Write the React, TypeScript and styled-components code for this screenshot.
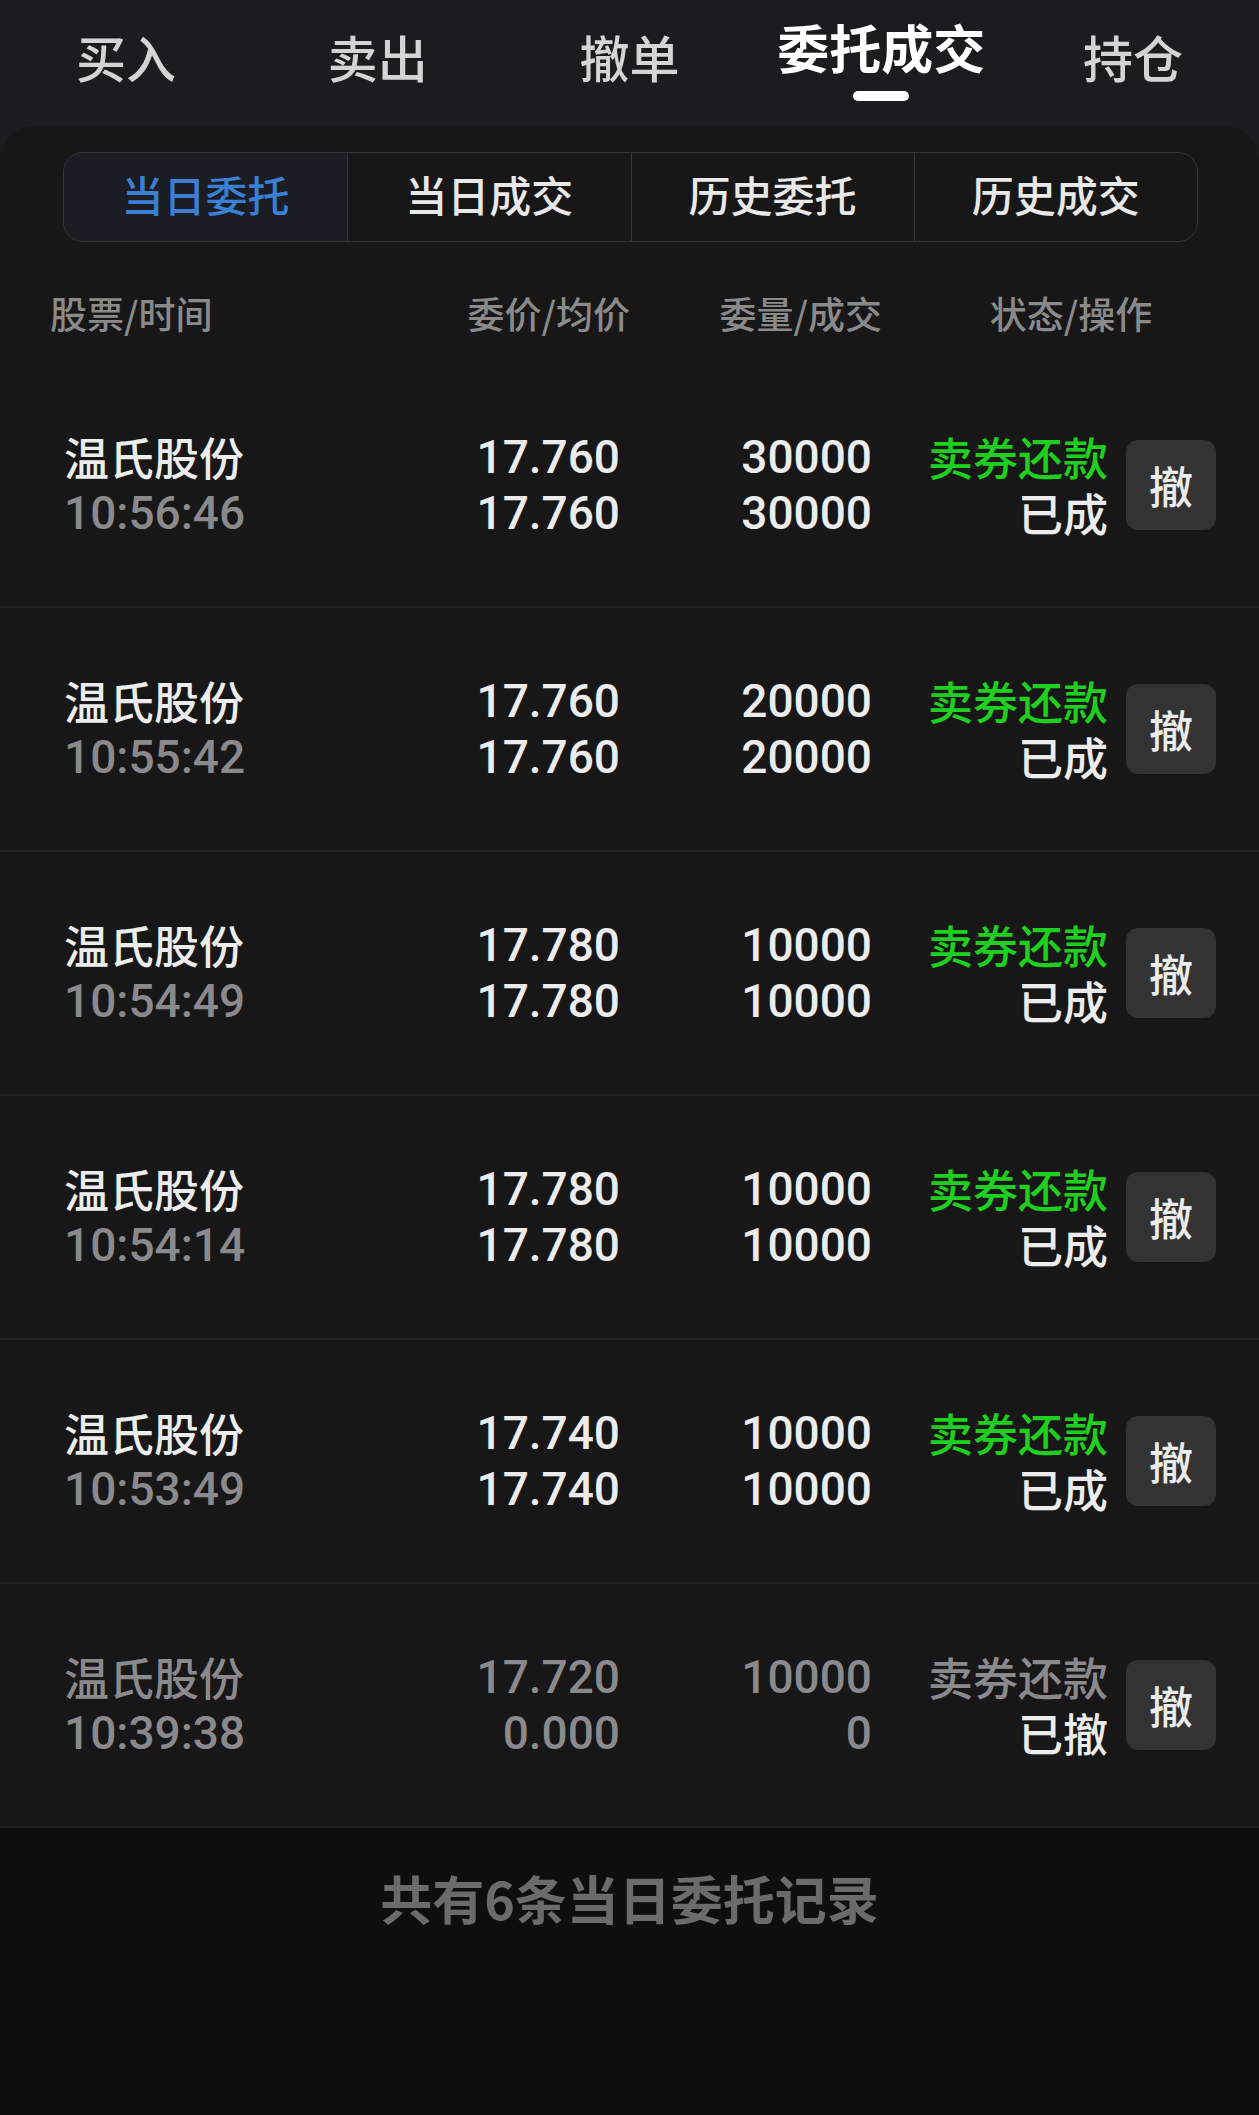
import React from "react";
import styled, { createGlobalStyle } from "styled-components";

const CJK = `"Noto Sans CJK SC", "Noto Sans", sans-serif`;
const NUM = `Roboto, "Noto Sans CJK SC", sans-serif`;

const Global = createGlobalStyle`
  html, body { margin: 0; padding: 0; background: #0e0e0e; }
  body { font-family: ${CJK}; -webkit-font-smoothing: antialiased; }
  #root { width: 1259px; }
`;

const Page = styled.div`
  width: 1259px;
  min-height: 2115px;
  background: #1c1c1e;
  display: flex;
  flex-direction: column;
`;

const TopTabs = styled.nav`
  display: grid;
  grid-template-columns: repeat(5, 1fr);
  height: 126px;
`;

const TopTab = styled.div<{ $active?: boolean }>`
  display: flex;
  flex-direction: column;
  align-items: center;
  padding-top: ${(p) => (p.$active ? 21 : 31)}px;
  font-size: ${(p) => (p.$active ? 52 : 50)}px;
  line-height: ${(p) => (p.$active ? 52 : 50)}px;
  color: ${(p) => (p.$active ? "#ffffff" : "#d4d4d4")};
  font-weight: ${(p) => (p.$active ? 700 : 500)};
`;

const Indicator = styled.span`
  margin-top: 18px;
  width: 56px;
  height: 10px;
  border-radius: 5px;
  background: #ffffff;
`;

const Card = styled.section`
  background: #171717;
  border-radius: 34px 34px 0 0;
  display: flex;
  flex-direction: column;
`;

const Segmented = styled.div`
  margin: 26px 61px 0 63px;
  height: 90px;
  box-sizing: border-box;
  border: 1.5px solid #363636;
  border-radius: 20px;
  display: grid;
  grid-template-columns: repeat(4, 1fr);
  overflow: hidden;
`;

const Segment = styled.div<{ $active?: boolean }>`
  display: flex;
  align-items: center;
  justify-content: center;
  padding-bottom: 6px;
  font-size: 42px;
  line-height: 42px;
  font-weight: 500;
  color: ${(p) => (p.$active ? "#3b7fd4" : "#e8e8e8")};
  background: ${(p) => (p.$active ? "#1a1d23" : "transparent")};
  & + & {
    border-left: 1.5px solid #363636;
  }
`;

const HeaderRow = styled.div`
  display: grid;
  grid-template-columns: 1fr 220px 252px 334px;
  height: 122px;
  box-sizing: border-box;
  padding: 53px 43px 0 50px;
  font-size: 37px;
  line-height: 36px;
  font-weight: 500;
  color: #8a8a8a;
`;

const HeaderCell = styled.div<{ $align: "left" | "right" | "center" }>`
  text-align: ${(p) => p.$align};
  padding-left: ${(p) => (p.$align === "center" ? 44 : 0)}px;
`;

const Row = styled.div`
  display: grid;
  grid-template-columns: 1fr 220px 252px 236px 108px;
  height: 244px;
  box-sizing: border-box;
  padding: 0 43px 0 64px;
  align-items: center;
  border-bottom: 2px solid #242424;
`;

const Cell = styled.div<{ $align: "start" | "end" }>`
  display: flex;
  flex-direction: column;
  align-items: flex-${(p) => p.$align};
  gap: 4px;
`;

const Line = styled.span<{ $num?: boolean; $color: string }>`
  font-family: ${(p) => (p.$num ? NUM : CJK)};
  font-size: ${(p) => (p.$num ? 46 : 45)}px;
  font-weight: 500;
  line-height: 52px;
  color: ${(p) => p.$color};
  white-space: nowrap;
`;

const CancelButton = styled.button`
  justify-self: end;
  width: 90px;
  height: 90px;
  border: none;
  border-radius: 12px;
  background: #333333;
  color: #ececec;
  font-family: ${CJK};
  font-size: 44px;
  line-height: 44px;
  font-weight: 500;
  padding: 0;
  display: flex;
  align-items: center;
  justify-content: center;
`;

const Footer = styled.footer`
  flex: 1;
  background: #0e0e0e;
  display: flex;
  justify-content: center;
  padding-top: 44px;
  font-size: 52px;
  line-height: 52px;
  font-weight: 700;
  color: #6b6b6b;
`;

type Order = {
  time: string;
  price: string;
  avg: string;
  qty: string;
  filled: string;
  status: string;
  cancelled?: boolean;
};

const orders: Order[] = [
  { time: "10:56:46", price: "17.760", avg: "17.760", qty: "30000", filled: "30000", status: "已成" },
  { time: "10:55:42", price: "17.760", avg: "17.760", qty: "20000", filled: "20000", status: "已成" },
  { time: "10:54:49", price: "17.780", avg: "17.780", qty: "10000", filled: "10000", status: "已成" },
  { time: "10:54:14", price: "17.780", avg: "17.780", qty: "10000", filled: "10000", status: "已成" },
  { time: "10:53:49", price: "17.740", avg: "17.740", qty: "10000", filled: "10000", status: "已成" },
  { time: "10:39:38", price: "17.720", avg: "0.000", qty: "10000", filled: "0", status: "已撤", cancelled: true },
];

const WHITE = "#ececec";
const GREY = "#8a8a8c";
const GREEN = "#1fcf1f";

export default function App() {
  const tabs = ["买入", "卖出", "撤单", "委托成交", "持仓"];
  const segs = ["当日委托", "当日成交", "历史委托", "历史成交"];
  return (
    <Page>
      <Global />
      <TopTabs>
        {tabs.map((t) => (
          <TopTab key={t} $active={t === "委托成交"}>
            {t}
            {t === "委托成交" && <Indicator />}
          </TopTab>
        ))}
      </TopTabs>
      <Card>
        <Segmented>
          {segs.map((s, i) => (
            <Segment key={s} $active={i === 0}>
              {s}
            </Segment>
          ))}
        </Segmented>
        <HeaderRow>
          <HeaderCell $align="left">股票/时间</HeaderCell>
          <HeaderCell $align="right">委价/均价</HeaderCell>
          <HeaderCell $align="right">委量/成交</HeaderCell>
          <HeaderCell $align="center">状态/操作</HeaderCell>
        </HeaderRow>
        {orders.map((o) => {
          const main = o.cancelled ? GREY : WHITE;
          return (
            <Row key={o.time}>
              <Cell $align="start">
                <Line $color={main}>温氏股份</Line>
                <Line $num $color={GREY}>{o.time}</Line>
              </Cell>
              <Cell $align="end">
                <Line $num $color={main}>{o.price}</Line>
                <Line $num $color={main}>{o.avg}</Line>
              </Cell>
              <Cell $align="end">
                <Line $num $color={main}>{o.qty}</Line>
                <Line $num $color={main}>{o.filled}</Line>
              </Cell>
              <Cell $align="end">
                <Line $color={o.cancelled ? GREY : GREEN}>卖券还款</Line>
                <Line $color={WHITE}>{o.status}</Line>
              </Cell>
              <CancelButton>撤</CancelButton>
            </Row>
          );
        })}
      </Card>
      <Footer>共有6条当日委托记录</Footer>
    </Page>
  );
}
